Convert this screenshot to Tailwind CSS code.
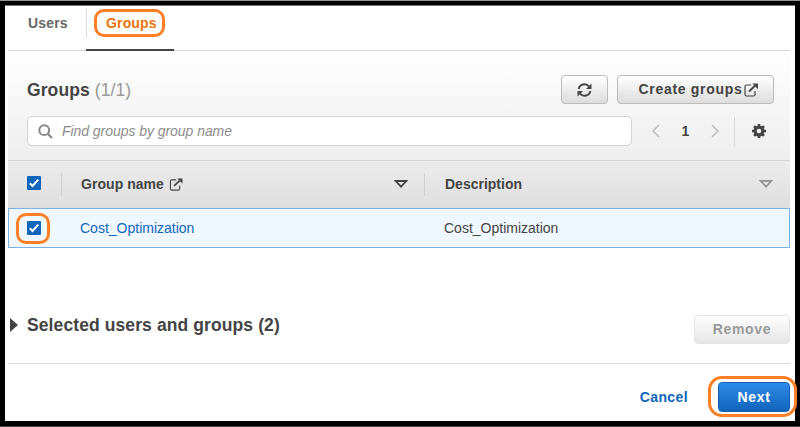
<!DOCTYPE html>
<html lang="en">
<head>
<meta charset="utf-8">
<title>Assign users and groups</title>
<script src="https://cdn.jsdelivr.net/npm/@tailwindcss/browser@4"></script>
</head>
<body class="bg-black overflow-hidden">
<svg class="hidden">
  <symbol id="external" viewBox="0 0 14 14"><path d="M7.2 2H2.5Q1 2 1 3.500V11.500Q1 13 2.500 13H9.500Q11 13 11 11.500V8" fill="none" stroke="currentColor" stroke-width="1.2"/><path d="M5 8.500L11 2.800" stroke="currentColor" stroke-width="1.900"/><path d="M8.300 0.500H14V6.200Z" fill="currentColor"/></symbol>
  <symbol id="check" viewBox="0 0 14 14"><rect width="14" height="14" rx="1" fill="#1166bb"/><path d="M2.800 7.300L5.500 10L11.300 3.600" fill="none" stroke="white" stroke-width="2"/></symbol>
  <symbol id="sort" viewBox="0 0 14 8"><path d="M1.700 1H12.300L7 6.700Z" fill="none" stroke="currentColor" stroke-width="1.800"/></symbol>
</svg>
<div class="w-[800px] h-[427px] border-t border-t-[#8f9692] border-b border-b-[#444]">
<main class="w-[790px] h-[416px] mt-1 ml-[5px] bg-white px-[3px] font-['Liberation_Sans',Arial,sans-serif] text-[14px] text-[#444] border-t border-[#777]">
  <nav class="w-[782px] h-[45px] border-b border-[#d8d8d8] flex font-bold leading-[16px]">
    <div class="w-[78px] pl-5 pt-[9px] text-[#666] tracking-[0.15px]">Users</div>
    <div class="relative w-[88px] h-[45px] border-b-2 border-[#444] pl-5 pt-[9px] text-[#e8730c] tracking-[0.15px]">
      <i class="absolute left-0 top-[2px] h-[30px] w-px bg-[#ddd]"></i>Groups
      <i class="absolute left-[8px] top-[3px] w-[71px] h-[28px] border-[3px] border-[#ff7f27] rounded-[10px]"></i>
    </div>
  </nav>
  <section class="w-[782px]">
    <div class="h-[109px] bg-linear-to-b from-white to-[#eeeeee] pt-[24px] pl-[19px] pr-4">
      <div class="flex h-[29px] items-center">
        <h1 class="text-[17.5px] font-bold leading-[20px] flex-1 tracking-[0.1px]">Groups <span class="font-normal text-[#999]">(1/1)</span></h1>
        <button class="w-[47px] h-[29px] border border-[#bbb] rounded-[4px] bg-linear-to-b from-white to-[#ddd] flex items-center justify-center mr-[9px]">
          <svg class="w-[15px] h-[14px]" viewBox="0 0 15 14"><path d="M1.800 6A5.600 5.200 0 0 1 12 3.500M13.200 8A5.600 5.200 0 0 1 3 10.500" fill="none" stroke="currentColor" stroke-width="2"/><path d="M14.500 0.500V6H9ZM0.500 13.500V8H6Z" fill="currentColor"/></svg>
        </button>
        <button class="w-[157px] h-[29px] border border-[#bbb] rounded-[4px] bg-linear-to-b from-white to-[#ddd] flex items-center font-bold pl-[19px] tracking-[0.7px]"><span class="w-[107px] whitespace-nowrap">Create groups</span><svg class="w-[14px] h-[14px]"><use href="#external"/></svg></button>
      </div>
      <div class="flex h-[30px] mt-[12px] items-center">
        <div class="w-[605px] h-[30px] bg-white border border-[#d3d3d3] rounded-[5px] flex items-center pl-[10px]">
          <svg class="w-[15px] h-[15px] mr-[9px] text-[#888]" viewBox="0 0 15 15"><circle cx="6.200" cy="6.200" r="4.900" fill="none" stroke="currentColor" stroke-width="2"/><path d="M9.500 9.500L14 14" stroke="currentColor" stroke-width="2.200"/></svg>
          <span class="italic text-[#8c8c8c] tracking-[-0.05px]">Find groups by group name</span>
        </div>
        <svg class="w-2 h-[14px] ml-[20px] text-[#bbb]" viewBox="0 0 8 14"><path d="M7 1L1 7L7 13" fill="none" stroke="currentColor" stroke-width="1.500"/></svg>
        <b class="w-[51px] text-center">1</b>
        <svg class="w-2 h-[14px] text-[#bbb]" viewBox="0 0 8 14"><path d="M1 1L7 7L1 13" fill="none" stroke="currentColor" stroke-width="1.500"/></svg>
        <i class="w-px h-[29px] bg-[#d8d8d8] ml-[15px] mr-[17px]"></i>
        <svg class="w-[14px] h-[14px]" viewBox="0 0 14 14"><circle cx="7" cy="7" r="3.900" fill="none" stroke="currentColor" stroke-width="3.200"/><path d="M7 0V3M7 11V14M0 7H3M11 7H14M2.050 2.050L4 4M10 10L11.950 11.950M11.950 2.050L10 4M4 10L2.050 11.950" stroke="currentColor" stroke-width="2.600"/></svg>
      </div>
    </div>
    <div class="h-[48px] border-t border-[#d5d5d5] bg-linear-to-b from-[#ececec] to-[#dfdfdf] flex items-center font-bold">
      <div class="w-[54px] h-[23px] border-r border-[#d0d0d0] pl-[19px] flex items-center"><svg class="w-[14px] h-[14px] -mt-1"><use href="#check"/></svg></div>
      <div class="w-[363px] h-[23px] border-r border-[#d0d0d0] pl-[19px] pr-[16px] flex items-center"><span class="tracking-[0.05px]">Group name</span><svg class="w-[14px] h-[13px] ml-[5px] mr-auto -mt-px"><use href="#external"/></svg><svg class="w-[14px] h-[8px] -mt-px"><use href="#sort"/></svg></div>
      <div class="flex-1 pl-5 pr-[17px] flex items-center justify-between"><span>Description</span><svg class="w-[14px] h-[8px] -mt-px text-[#999]"><use href="#sort"/></svg></div>
    </div>
    <div class="h-[40px] bg-[#f0f8ff] border border-[#7bb2e6] flex items-center">
      <div class="relative w-[71px] pl-[18px]"><svg class="w-[14px] h-[14px] -mt-px"><use href="#check"/></svg><i class="absolute left-[7px] -top-[9px] w-[34px] h-[31px] border-[3px] border-[#ff7f27] rounded-[10px]"></i></div>
      <a class="w-[364px] text-[#1166bb]">Cost_Optimization</a>
      <span>Cost_Optimization</span>
    </div>
  </section>
  <section class="w-[782px] h-[116px] border-b border-[#ddd] flex justify-between pl-[2px]">
    <div class="flex items-center h-[20px] mt-[67px]"><svg class="w-2 h-[14px] mr-[9px]" viewBox="0 0 8 14"><path d="M0 0L8 7L0 14Z" fill="currentColor"/></svg><h2 class="text-[17.5px] leading-[20px] font-bold tracking-[0.1px]">Selected users and groups (2)</h2></div>
    <button class="mt-[67px] w-[96px] h-[29px] border border-[#e5e5e5] rounded-[4px] bg-linear-to-b from-white to-[#e6e6e6] text-[#999] font-bold tracking-[0.7px]">Remove</button>
  </section>
  <footer class="w-[782px] flex justify-end items-center pt-[18px] font-bold">
    <a class="text-[#1166bb] mr-[30px] tracking-[0.4px]">Cancel</a>
    <button class="relative w-[72px] h-[30px] border border-[#1460ae] rounded-[4px] bg-linear-to-b from-[#2d8bea] to-[#1164ba] text-white tracking-[0.7px]">Next<i class="absolute -left-[11px] -top-[7px] w-[89px] h-[41px] border-[3px] border-[#ff7f27] rounded-[14px]"></i></button>
  </footer>
</main>
</div>
</body>
</html>
